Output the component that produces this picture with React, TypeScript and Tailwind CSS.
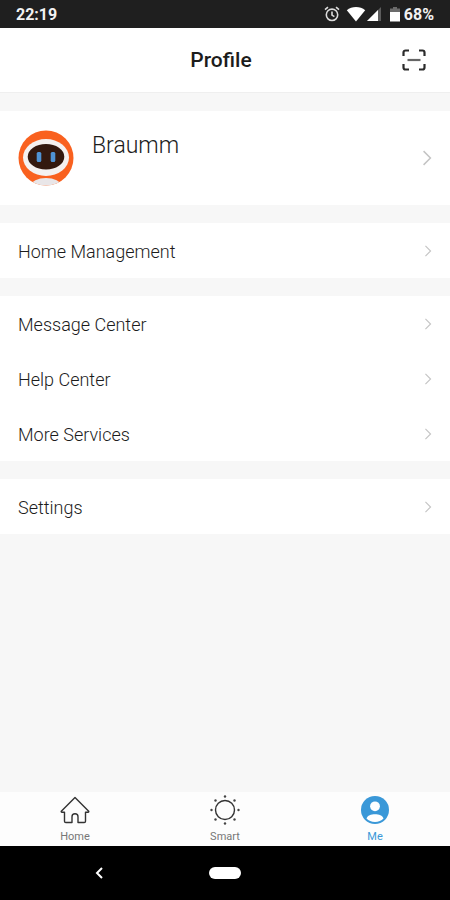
import { useState } from "react";

type TabName = "Home" | "Smart" | "Me";

interface ChevronProps {
  className?: string;
}

const Chevron = ({ className }: ChevronProps) => (
  <svg
    className={className}
    viewBox="0 0 8 14"
    fill="none"
    stroke="#c4c4c4"
    strokeWidth="1.3"
    aria-hidden="true"
  >
    <path d="M1 1l6 6-6 6" />
  </svg>
);

const StatusBar = () => (
  <div className="flex h-7 shrink-0 items-center justify-between bg-[#1f1f1f] px-4 text-base font-bold text-[#f2f2f2]">
    <span className="pt-0.5">22:19</span>
    <div className="flex items-center">
      {/* alarm */}
      <svg className="mr-1.5 h-4 w-4" viewBox="0 0 16 16" fill="none" stroke="#dcdcdc" strokeWidth="1.6">
        <circle cx="8" cy="8.8" r="5.7" />
        <path d="M8 5.5v3.6l2.4 1.5M1 3.7L4 1.2M15 3.7L12 1.2" />
      </svg>
      {/* wifi */}
      <svg className="h-4 w-5" viewBox="0 0 20 16" fill="#fff">
        <path d="M10 15.5L.8 4.2C3.4 2 6.5 .9 10 .9s6.6 1.1 9.2 3.3z" />
      </svg>
      {/* signal */}
      <svg className="mr-2 h-4 w-4" viewBox="0 0 16 16">
        <path d="M1 15L15 1v14z" fill="#5c5c5c" />
        <path d="M1 15L12 4v11z" fill="#fff" />
      </svg>
      {/* battery */}
      <svg className="mr-1 h-4 w-2.5" viewBox="0 0 10 16">
        <path d="M3 1h4v1.5h3V7H0V2.5h3z" fill="#6b6b6b" />
        <path d="M0 6h10v9.5H0z" fill="#fff" />
      </svg>
      <span className="pt-0.5">68%</span>
    </div>
  </div>
);

const Header = () => (
  <header className="grid h-[65px] shrink-0 grid-cols-[1fr_auto_1fr] items-center border-b border-[#efefef] bg-white pr-6 pl-4">
    <h1 className="col-start-2 pt-0.5 text-[21px] font-medium text-[#1c1c1c]">Profile</h1>
    <button type="button" aria-label="Scan" className="justify-self-end">
      <svg className="h-6 w-6" viewBox="0 0 24 24" fill="none" stroke="#2b2b2b" strokeWidth="2.2">
        <path d="M1.5 8V4.5a2 2 0 0 1 2-2H7M17 2.5h3.5a2 2 0 0 1 2 2V8M22.5 16v3.5a2 2 0 0 1-2 2H17M7 21.5H3.5a2 2 0 0 1-2-2V16" />
        <path d="M5.5 12h13" stroke="#666" />
      </svg>
    </button>
  </header>
);

const RobotAvatar = () => (
  <svg className="h-14 w-14 shrink-0" viewBox="0 0 56 56" aria-hidden="true">
    <defs>
      <clipPath id="avatar">
        <circle cx="28" cy="28" r="27.5" />
      </clipPath>
    </defs>
    <g clipPath="url(#avatar)">
      <rect width="56" height="56" fill="#f9611f" />
      <ellipse cx="28" cy="55.5" rx="15" ry="7.5" fill="#e9e6e8" />
      <ellipse cx="28" cy="27.5" rx="23" ry="18.5" fill="#f4f1f0" />
      <ellipse cx="28" cy="26.8" rx="18.3" ry="12.8" fill="#33190f" />
      <rect x="18.7" y="22" width="4.6" height="10" rx="1.5" fill="#4f93d4" />
      <rect x="32.7" y="22" width="4.6" height="10" rx="1.5" fill="#4f93d4" />
    </g>
  </svg>
);

const ProfileCard = () => (
  <button type="button" className="flex h-[94px] w-full items-center bg-white px-[18px] text-left">
    <RobotAvatar />
    <span className="flex-1 self-start pt-[18px] pl-[18px] text-[23px] font-light text-[#1c1c1c]">
      Braumm
    </span>
    <Chevron className="h-4 w-2.5" />
  </button>
);

const MenuGroup = ({ items }: { items: string[] }) => (
  <ul className="bg-white">
    {items.map((item) => (
      <li key={item}>
        <button
          type="button"
          className="flex h-[55px] w-full items-center justify-between px-[18px] text-left text-lg font-light text-[#1c1c1c]"
        >
          <span className="pt-0.5">{item}</span>
          <Chevron className="h-3 w-2" />
        </button>
      </li>
    ))}
  </ul>
);

const HomeIcon = () => (
  <svg className="h-8 w-8" viewBox="0 0 32 32" fill="none" stroke="#333" strokeWidth="1.4" strokeLinejoin="round">
    <path d="M16 3.5L2.3 17.2c-.3.5 0 1 .6 1h2.6v9c0 .8.5 1.3 1.3 1.3H13v-5.7a3 3 0 0 1 6 0v5.7h6.2c.8 0 1.3-.5 1.3-1.3v-9h2.6c.6 0 .9-.5.6-1z" />
  </svg>
);

const SmartIcon = () => (
  <svg className="h-8 w-8" viewBox="0 0 32 32" fill="none" stroke="#333" strokeWidth="1.4">
    <circle cx="16" cy="16" r="9.5" />
    <g fill="#444" stroke="none">
      <circle cx="16" cy="2.5" r="1.2" />
      <circle cx="25.5" cy="6.5" r="1.2" />
      <circle cx="29.5" cy="16" r="1.2" />
      <circle cx="25.5" cy="25.5" r="1.2" />
      <circle cx="16" cy="29.5" r="1.2" />
      <circle cx="6.5" cy="25.5" r="1.2" />
      <circle cx="2.5" cy="16" r="1.2" />
      <circle cx="6.5" cy="6.5" r="1.2" />
    </g>
  </svg>
);

const MeIcon = () => (
  <svg className="h-8 w-8" viewBox="0 0 32 32">
    <circle cx="16" cy="16" r="14" fill="#3a98d8" />
    <circle cx="16" cy="12.3" r="4.9" fill="#fff" />
    <path d="M7.5 24.5c1-3 4.5-4.2 8.500-4.200s7.500 1.200 8.500 4.200c-2 2.300-5 3.500-8.500 3.500s-6.500-1.200-8.500-3.500z" fill="#fff" />
  </svg>
);

const tabs: { name: TabName; icon: React.ReactNode }[] = [
  { name: "Home", icon: <HomeIcon /> },
  { name: "Smart", icon: <SmartIcon /> },
  { name: "Me", icon: <MeIcon /> },
];

const App = () => {
  const [active, setActive] = useState<TabName>("Me");

  return (
    <div className="flex min-h-screen flex-col bg-[#f7f7f7] font-['Roboto',sans-serif]">
      <StatusBar />
      <Header />
      <main className="flex flex-1 flex-col gap-[18px] pt-[18px]">
        <ProfileCard />
        <MenuGroup items={["Home Management"]} />
        <MenuGroup items={["Message Center", "Help Center", "More Services"]} />
        <MenuGroup items={["Settings"]} />
      </main>
      <nav className="grid h-[54px] shrink-0 grid-cols-3 bg-[#fdfdfd]">
        {tabs.map(({ name, icon }) => (
          <button
            key={name}
            type="button"
            onClick={() => setActive(name)}
            className={`flex flex-col items-center gap-1 pt-0.5 text-[11px] leading-[14px] ${
              active === name ? "text-[#3a98d8]" : "text-[#777]"
            }`}
          >
            {icon}
            {name}
          </button>
        ))}
      </nav>
      <div className="grid h-[54px] shrink-0 grid-cols-3 items-center justify-items-center bg-black">
        <button type="button" aria-label="Back" className="pl-12">
          <svg className="h-3 w-2" viewBox="0 0 8 12" fill="none" stroke="#fff" strokeWidth="2">
            <path d="M7 1L2 6l5 5" />
          </svg>
        </button>
        <button type="button" aria-label="Home screen" className="h-3 w-8 rounded-full bg-white" />
      </div>
    </div>
  );
};

export default App;
